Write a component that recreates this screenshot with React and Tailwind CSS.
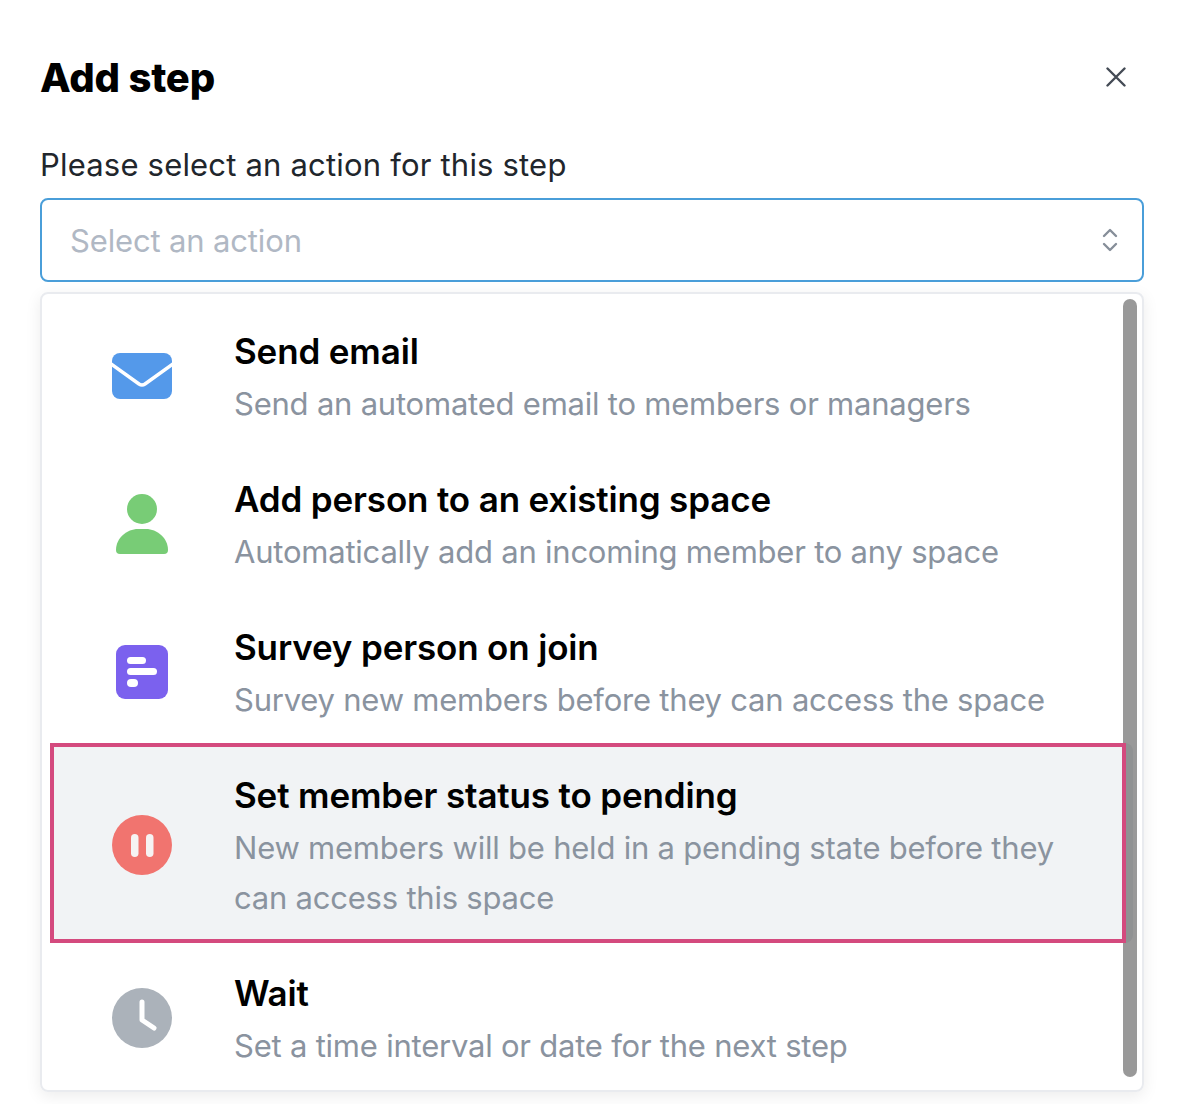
const font = { fontFamily: "Inter, 'Noto Sans', sans-serif" };

function MailIcon() {
  return (
    <svg width="60" height="46" viewBox="0 0 60 46">
      <rect width="60" height="46" rx="8" fill="#5499ea" />
      <path d="M-1 11 L27 31 Q30 33 33 31 L61 11" fill="none" stroke="#fff" strokeWidth="3.5" />
    </svg>
  );
}

function PersonIcon() {
  return (
    <svg width="52" height="60" viewBox="0 0 52 60">
      <circle cx="26" cy="15" r="15" fill="#78cc76" />
      <path d="M0 56 C0 44 11 35 22 35 H30 C41 35 52 44 52 56 Q52 60 48 60 H4 Q0 60 0 56 Z" fill="#78cc76" />
    </svg>
  );
}

function SurveyIcon() {
  return (
    <svg width="52" height="54" viewBox="0 0 52 54">
      <rect width="52" height="54" rx="9" fill="#7b61ee" />
      <rect x="11" y="12" width="19" height="7" rx="3.5" fill="#fff" />
      <rect x="11" y="23" width="30" height="7" rx="3.5" fill="#fff" />
      <rect x="11" y="34" width="11" height="8" rx="4" fill="#fff" />
    </svg>
  );
}

function PauseIcon() {
  return (
    <svg width="60" height="60" viewBox="0 0 60 60">
      <circle cx="30" cy="30" r="30" fill="#f1746f" />
      <rect x="19" y="19" width="7.5" height="23" rx="3.75" fill="#f6f3f3" />
      <rect x="34" y="19" width="7.5" height="23" rx="3.75" fill="#f6f3f3" />
    </svg>
  );
}

function ClockIcon() {
  return (
    <svg width="60" height="60" viewBox="0 0 60 60">
      <circle cx="30" cy="30" r="30" fill="#abb2ba" />
      <path d="M30 14 V32 L42 40" fill="none" stroke="#fff" strokeWidth="5" strokeLinecap="round" strokeLinejoin="round" />
    </svg>
  );
}

const actions = [
  { icon: <MailIcon />, title: "Send email", text: "Send an automated email to members or managers" },
  { icon: <PersonIcon />, title: "Add person to an existing space", text: "Automatically add an incoming member to any space" },
  { icon: <SurveyIcon />, title: "Survey person on join", text: "Survey new members before they can access the space" },
  { icon: <PauseIcon />, title: "Set member status to pending", text: "New members will be held in a pending state before they can access this space", active: true },
  { icon: <ClockIcon />, title: "Wait", text: "Set a time interval or date for the next step" },
];

function ActionContent({ action }) {
  return (
    <>
      <div className="w-[60px] shrink-0 flex justify-center">{action.icon}</div>
      <div className="ml-[62px] flex-1">
        <h3 className="text-[35px] leading-[56px] font-semibold text-black tracking-[-0.15px]">{action.title}</h3>
        <p className="text-[31px] leading-[50px] text-[#8a939f] tracking-[-0.22px]">{action.text}</p>
      </div>
    </>
  );
}

export default function App() {
  return (
    <div className="w-[1188px] h-[1104px] overflow-hidden bg-white pt-[50px] pl-[40px] pr-[44px]" style={font}>
      <div className="flex items-center justify-between h-[56px]">
        <h2 className="text-[40px] leading-[56px] font-extrabold text-black tracking-[-0.2px]">Add step</h2>
        <svg width="20" height="20" viewBox="0 0 20 20" className="mr-[18px] -translate-y-px">
          <path d="M1.5 1.5 L18.5 18.5 M18.5 1.5 L1.5 18.5" stroke="#444b55" strokeWidth="2.4" strokeLinecap="round" />
        </svg>
      </div>
      <p className="mt-[31px] text-[31px] leading-[56px] text-[#21262c] tracking-[0.19px]">Please select an action for this step</p>
      <div className="mt-[5px] h-[84px] border-2 border-[#4a9ed9] rounded-lg flex items-center justify-between pl-[28px] pr-[24px]">
        <span className="text-[31px] text-[#b0b8c4] tracking-[-0.15px] translate-y-px">Select an action</span>
        <svg width="16" height="26" viewBox="0 0 16 26">
          <path d="M2 9 L8 3 L14 9 M2 17 L8 23 L14 17" fill="none" stroke="#868e99" strokeWidth="2.4" strokeLinecap="round" strokeLinejoin="round" />
        </svg>
      </div>
      <div className="relative mt-[10px] h-[800px] border-2 border-[#e9ebef] rounded-lg shadow-[0_4px_16px_rgba(0,0,0,0.08)] overflow-hidden pt-[8px] pl-[8px]">
        {actions.map((action) =>
          action.active ? (
            <div key={action.title} className="-mt-[3px] mb-[1px] w-[1083px] rounded-lg bg-[#f1f3f5]">
              <div className="relative z-10 w-[1076px] border-4 border-[#d44a7e] bg-[#f1f3f5] pl-[58px] pt-[20px] pb-[16px] pr-[40px] flex items-center">
                <ActionContent action={action} />
              </div>
            </div>
          ) : (
            <div key={action.title} className="w-[1076px] h-[148px] pl-[62px] flex items-center">
              <ActionContent action={action} />
            </div>
          )
        )}
        <div className="absolute top-[5px] right-[5px] w-[14px] h-[778px] rounded-full bg-black/40" />
      </div>
    </div>
  );
}
